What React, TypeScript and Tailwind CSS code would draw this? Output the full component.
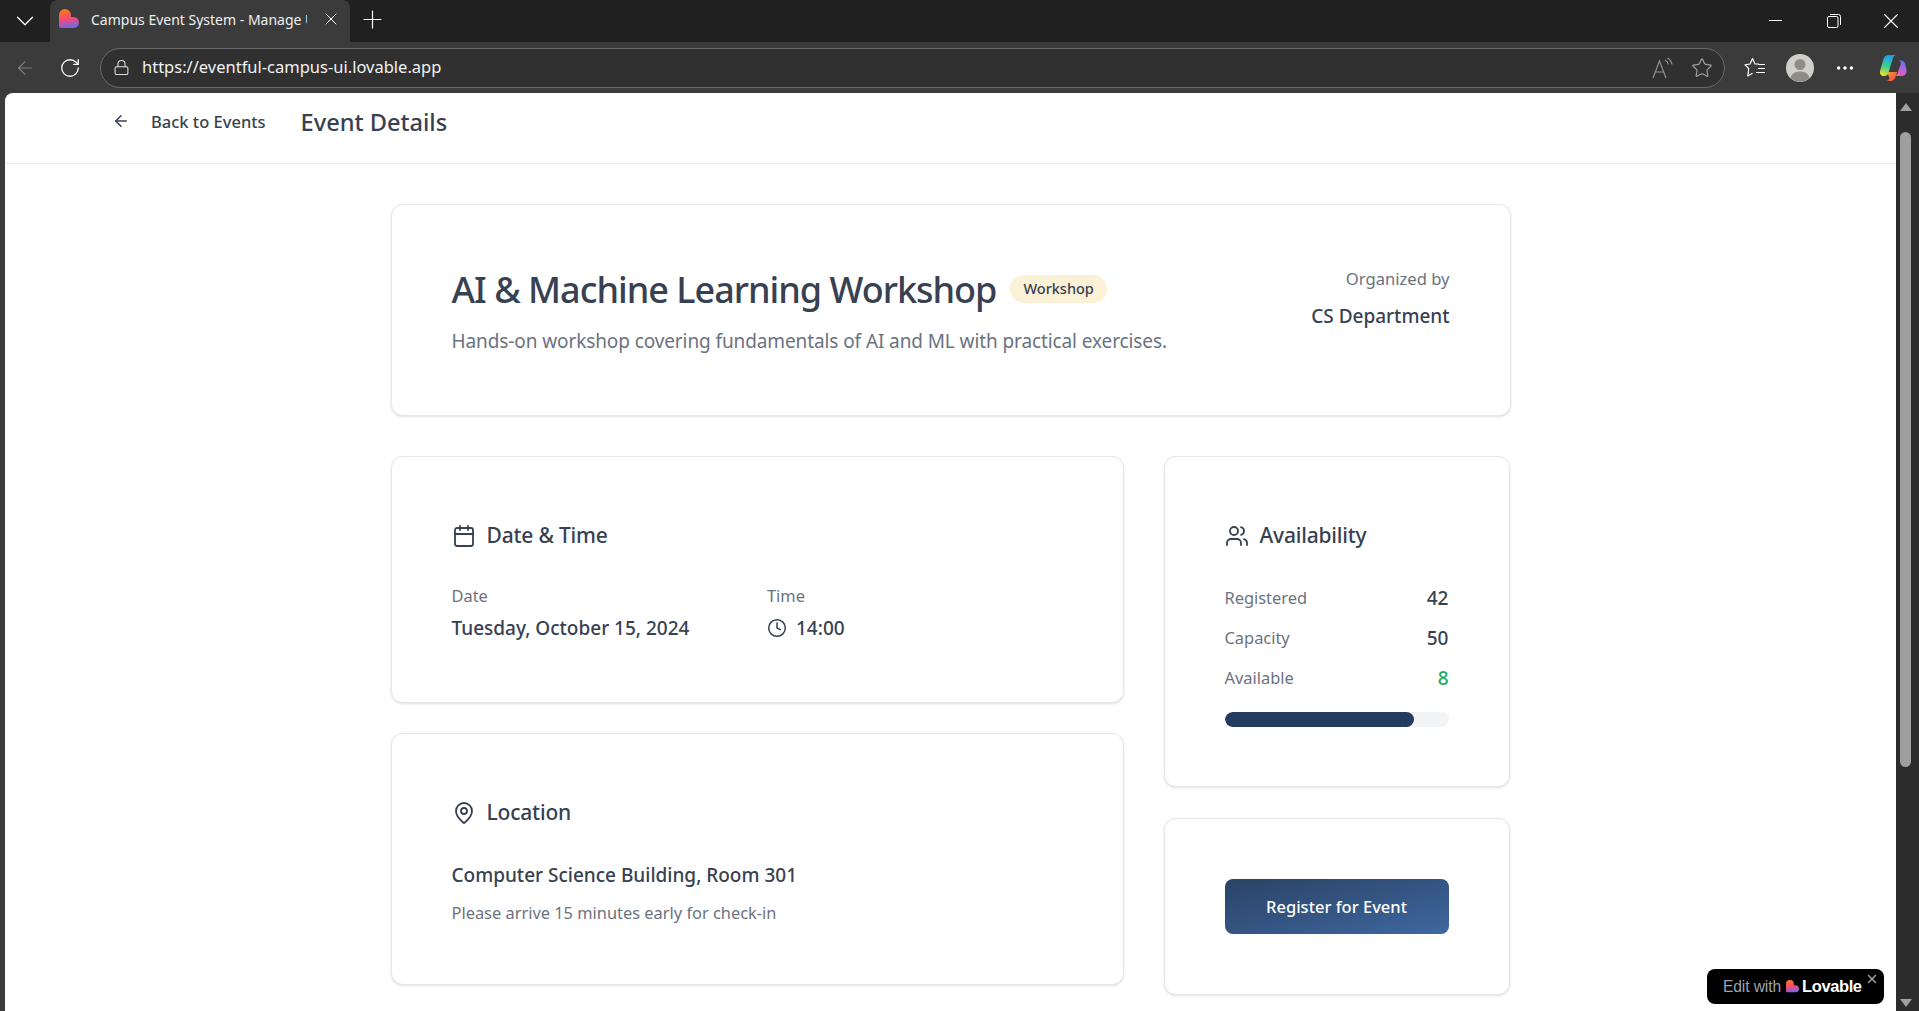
import { ArrowLeft, Calendar, ChevronDown, Clock, Ellipsis, Lock, MapPin, Plus, RotateCw, Star, Users, X } from 'lucide-react';
import type { ReactNode } from 'react';

const FONT = "font-['Noto_Sans','Open_Sans',sans-serif]";

// ---- Drawn logos and browser glyphs ----

function HeartLogo({ className }: { className: string }) {
  return (
    <svg viewBox="0 0 20 20" className={className}>
      <defs>
        <linearGradient id="heartFill" x1="0.35" y1="0" x2="0.5" y2="1">
          <stop offset="0" stopColor="#ff7a10" />
          <stop offset="0.55" stopColor="#f2487c" />
          <stop offset="1" stopColor="#6a6cf0" />
        </linearGradient>
      </defs>
      <path d="M0 6a6 6 0 0 1 12 0v2h2.500a5.500 5.500 0 0 1 0 11H2a2 2 0 0 1-2-2z" fill="url(#heartFill)" />
    </svg>
  );
}

function CopilotLogo() {
  return (
    <svg viewBox="0 0 28 28" className="h-7 w-7">
      <defs>
        <linearGradient id="copilotA" x1="0.5" y1="0" x2="0.3" y2="1">
          <stop offset="0" stopColor="#1c9cf5" />
          <stop offset="0.55" stopColor="#3ccf8a" />
          <stop offset="1" stopColor="#f5dc2e" />
        </linearGradient>
        <linearGradient id="copilotB" x1="0.8" y1="0" x2="0.3" y2="1">
          <stop offset="0" stopColor="#4a7cf0" />
          <stop offset="0.5" stopColor="#b45fe0" />
          <stop offset="1" stopColor="#f5609a" />
        </linearGradient>
        <linearGradient id="copilotC" x1="0" y1="0" x2="1" y2="1">
          <stop offset="0" stopColor="#f9a03a" />
          <stop offset="1" stopColor="#ee4040" />
        </linearGradient>
      </defs>
      <path d="M8 18h10l-1.500 5c-.7 2.500-2.500 4-5 4H7c2 0 3-1 3.500-3z" fill="url(#copilotC)" />
      <path
        d="M10 1h8c-2.500 0-3.500 1.500-4.200 3.500L9.500 18.500C8.800 21 7.500 22 5.500 22h-1C1.800 22 .5 19.500 1 17L4.500 5C5.300 2.500 7.500 1 10 1z"
        fill="url(#copilotA)"
      />
      <path
        d="M19 6.500h3c2.300 0 3.700 1.300 4.300 3.500l1.200 6c.5 2.800-1.300 6-4.500 6h-8.500c2.500 0 3.700-1.500 4.300-3.500l3-8.500c.4-1.500-.8-3.500-2.800-3.500z"
        fill="url(#copilotB)"
      />
    </svg>
  );
}

function ReadAloudIcon() {
  return (
    <svg viewBox="0 0 24 24" fill="none" stroke="#8f8f8f" strokeWidth="1.200" className="h-6 w-6">
      <path d="M3 22L9.500 5 16 22M5.300 16h8.400" />
      <path d="M15 4c1.800.9 3 2.500 3.400 4.500M17.500 2c2.500 1.300 4 3.500 4.500 6.500" />
    </svg>
  );
}

function FavoritesIcon() {
  return (
    <svg viewBox="0 0 24 24" fill="none" stroke="white" strokeWidth="1.200" className="h-6 w-6">
      <path d="M16 8h-4L9.500 2.500 7 8l-5 .8 3.700 3.700L4.800 20l4.700-2.700" strokeLinejoin="round" />
      <path d="M15 8.500h7M15 12.500h7M13 16.500h9" />
    </svg>
  );
}

function RestoreIcon() {
  return (
    <svg viewBox="0 0 14 14" fill="none" stroke="white" strokeWidth="1" className="h-[14px] w-[14px]">
      <rect x="0.500" y="2.500" width="10.500" height="11" rx="1.500" />
      <path d="M3 .5h8.500a2 2 0 0 1 2 2V11" />
    </svg>
  );
}

function Avatar() {
  return (
    <svg viewBox="0 0 28 28" className="h-7 w-7">
      <circle cx="14" cy="14" r="14" fill="#d0cfca" />
      <circle cx="14" cy="10.500" r="5.500" fill="#8f8c87" />
      <path d="M4.500 24c1-4.500 5-6.500 9.500-6.500s8.500 2 9.500 6.500a14 14 0 0 1-19 0z" fill="#8f8c87" />
    </svg>
  );
}

// ---- Browser chrome ----

function TabStrip() {
  return (
    <div className="flex h-[42px] items-end bg-[#202020] text-white">
      <div className="flex h-full w-[50px] items-center justify-center">
        <ChevronDown className="h-[30px] w-[30px] shrink-0" strokeWidth={1} />
      </div>
      <div className="flex h-[42px] w-[300px] items-center rounded-t-lg bg-[#3b3b3b] pr-[9px] pb-[4px] pl-[9px]">
        <HeartLogo className="h-5 w-5 shrink-0" />
        <span className="ml-3 w-[216px] overflow-hidden text-[14px] whitespace-nowrap text-[#f0f0f0]">
          Campus Event System - Manage U
        </span>
        <X className="ml-[14px] h-5 w-5" strokeWidth={1.200} />
      </div>
      <div className="flex h-full w-[44px] items-center justify-center pb-[3px]">
        <Plus className="h-[29px] w-[29px] shrink-0" strokeWidth={1} />
      </div>
      <div className="flex-1" />
      <div className="flex h-full w-[174px] items-center pl-[24px]">
        <div className="mb-[2px] h-px w-[13px] bg-white" />
        <div className="ml-[45px]">
          <RestoreIcon />
        </div>
        <X className="ml-[37px] h-[26px] w-[26px]" strokeWidth={1} />
      </div>
    </div>
  );
}

function Toolbar() {
  return (
    <div className="flex h-[51px] items-center bg-[#3b3b3b] text-white">
      <div className="flex w-[100px] items-center pl-[14px]">
        <ArrowLeft className="h-[22px] w-[22px] text-[#808080]" strokeWidth={1.200} />
        <RotateCw className="ml-[23px] h-[22px] w-[22px]" strokeWidth={1.400} />
      </div>
      <div className="flex h-10 w-[1625px] items-center rounded-full border border-[#6a6a6a] bg-[#303030] pr-[11px] pl-3">
        <Lock className="h-[17px] w-[17px] text-[#e0e0e0]" strokeWidth={1.500} />
        <span className="ml-[12px] flex-1 text-[16.500px] text-[#f2f2f2]">https://eventful-campus-ui.lovable.app</span>
        <ReadAloudIcon />
        <Star className="ml-[17px] h-[22px] w-[22px] text-[#a0a0a0]" strokeWidth={1.300} />
      </div>
      <div className="ml-[18px]">
        <FavoritesIcon />
      </div>
      <div className="ml-[19px]">
        <Avatar />
      </div>
      <Ellipsis className="ml-[20px] h-[22px] w-[22px]" strokeWidth={1.800} />
      <div className="ml-[23px] shrink-0">
        <CopilotLogo />
      </div>
    </div>
  );
}

function ScrollBar() {
  return (
    <div className="flex w-[23px] flex-col items-center bg-[#2c2c2c] pt-[10px] pr-[4px]">
      <div className="h-0 w-0 border-x-[6px] border-b-[8px] border-x-transparent border-b-[#a0a0a0]" />
      <div className="mt-[21px] h-[635px] w-[11px] rounded-full bg-[#9f9f9f]" />
      <div className="mt-auto mb-[4px] h-0 w-0 border-x-[6px] border-t-[8px] border-x-transparent border-t-[#a0a0a0]" />
    </div>
  );
}

// ---- Page ----

function Card({ className, children }: { className: string; children: ReactNode }) {
  return <div className={`rounded-xl border border-[#e5e7eb] bg-white shadow-sm ${className}`}>{children}</div>;
}

function CardTitle({ icon, title }: { icon: ReactNode; title: string }) {
  return (
    <div className="flex h-9 items-center gap-[11px]">
      {icon}
      <h2 className="text-[21px] font-medium tracking-[-0.2px] text-[#374151]">{title}</h2>
    </div>
  );
}

function StatRow({ label, value, valueClass }: { label: string; value: string; valueClass: string }) {
  return (
    <div className="flex h-10 items-center justify-between">
      <span className="text-[16.400px] text-[#6b7280]">{label}</span>
      <span className={`text-[19px] font-medium ${valueClass}`}>{value}</span>
    </div>
  );
}

function EventDetails() {
  return (
    <div className="relative min-w-0 flex-1 overflow-hidden rounded-tl-lg bg-white">
      <header className="flex h-[71px] items-start border-b border-[#e5e7eb] pt-[11px] pl-[107px]">
        <ArrowLeft className="mt-[8px] h-[18px] w-[18px] text-[#374151]" strokeWidth={2} />
        <span className="mt-[6px] ml-[21px] text-[16.500px] font-medium text-[#374151]">Back to Events</span>
        <h1 className="mt-[1px] ml-[35px] text-[23.600px] font-medium text-[#374151]">Event Details</h1>
      </header>

      <main className="mx-auto w-[1120px] pt-[40px]">
        <Card className="flex h-[212px] items-start justify-between px-[60px] pt-[58px]">
          <div>
            <div className="flex items-center">
              <h1 className="text-[36px] font-medium tracking-[-1px] text-[#374151]">AI &amp; Machine Learning Workshop</h1>
              <span className="mb-[2px] ml-[14px] flex h-[28px] items-center rounded-full bg-[#fbf1d6] px-[13px] text-[14.500px] font-medium text-[#374151]">
                Workshop
              </span>
            </div>
            <p className="mt-[10px] text-[19px] tracking-[-0.1px] text-[#6b7280]">
              Hands-on workshop covering fundamentals of AI and ML with practical exercises.
            </p>
          </div>
          <div className="text-right">
            <p className="pt-[4px] text-[16.600px] text-[#6b7280]">Organized by</p>
            <p className="mt-[10px] text-[19px] font-medium text-[#374151]">CS Department</p>
          </div>
        </Card>

        <div className="mt-[40px] grid grid-cols-[733px_346px] gap-x-[40px]">
          <div className="flex flex-col gap-[30px]">
            <Card className="h-[247px] px-[60px] pt-[61px]">
              <CardTitle icon={<Calendar className="h-6 w-6 text-[#374151]" strokeWidth={1.800} />} title="Date & Time" />
              <div className="mt-[30px] grid grid-cols-2 gap-x-5">
                <div>
                  <p className="text-[16.400px] text-[#6b7280]">Date</p>
                  <p className="mt-[5px] text-[19px] font-medium text-[#374151]">Tuesday, October 15, 2024</p>
                </div>
                <div>
                  <p className="text-[16.400px] text-[#6b7280]">Time</p>
                  <div className="mt-[5px] flex items-center gap-[9px]">
                    <Clock className="h-5 w-5 text-[#374151]" strokeWidth={1.800} />
                    <span className="text-[19px] font-medium text-[#374151]">14:00</span>
                  </div>
                </div>
              </div>
            </Card>
            <Card className="h-[252px] px-[60px] pt-[61px]">
              <CardTitle icon={<MapPin className="h-6 w-6 text-[#374151]" strokeWidth={1.800} />} title="Location" />
              <p className="mt-[30px] text-[19px] font-medium text-[#374151]">Computer Science Building, Room 301</p>
              <p className="mt-[11px] text-[16.400px] text-[#6b7280]">Please arrive 15 minutes early for check-in</p>
            </Card>
          </div>

          <div className="flex flex-col gap-[31px]">
            <Card className="h-[331px] px-[60px] pt-[61px]">
              <CardTitle icon={<Users className="h-6 w-6 text-[#374151]" strokeWidth={1.800} />} title="Availability" />
              <div className="mt-[24px]">
                <StatRow label="Registered" value="42" valueClass="text-[#374151]" />
                <StatRow label="Capacity" value="50" valueClass="text-[#374151]" />
                <StatRow label="Available" value="8" valueClass="text-[#22a860]" />
              </div>
              <div className="mt-[14px] h-[15px] w-full overflow-hidden rounded-full bg-[#f3f4f6]">
                <div className="h-full w-[84.500%] rounded-full bg-[#243c5f]" />
              </div>
            </Card>
            <Card className="h-[177px] px-[60px] pt-[60px]">
              <button className="h-[55px] w-full rounded-lg bg-gradient-to-br from-[#2a4365] to-[#3f67a0] pt-[2px] text-[16.500px] font-medium text-white">
                Register for Event
              </button>
            </Card>
          </div>
        </div>
      </main>

      <div className="absolute right-[12px] bottom-[7px] flex h-[35px] w-[177px] items-center rounded-lg bg-black pl-[16px] font-['Liberation_Sans',sans-serif] whitespace-nowrap">
        <span className="text-[15.600px] tracking-[-0.1px] text-[#9ca3af]">Edit with</span>
        <HeartLogo className="ml-[5px] h-[13px] w-[13px] shrink-0" />
        <span className="ml-[3px] text-[16.500px] font-bold tracking-[-0.4px] text-white">Lovable</span>
        <X className="absolute top-[3px] right-[5px] h-[14px] w-[14px] text-[#a0a0a0]" strokeWidth={2.500} />
      </div>
    </div>
  );
}

export default function App() {
  return (
    <div className={`flex h-[1011px] flex-col overflow-hidden bg-[#3b3b3b] ${FONT}`}>
      <TabStrip />
      <Toolbar />
      <div className="flex min-h-0 flex-1 pl-[5px]">
        <EventDetails />
        <ScrollBar />
      </div>
    </div>
  );
}
